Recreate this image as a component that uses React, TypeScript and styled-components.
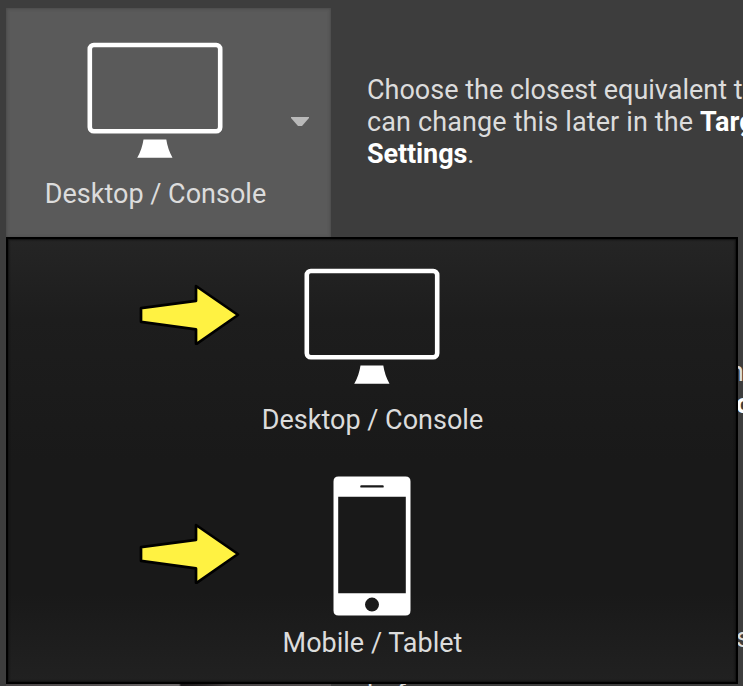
import React from "react";
import styled, { createGlobalStyle } from "styled-components";

const GlobalStyle = createGlobalStyle`
  *{box-sizing:border-box}
  body{margin:0;background:#3d3d3d;overflow:hidden;font-family:Roboto,sans-serif}
`;
const Page = styled.main`
  position:relative;width:743px;height:686px;overflow:hidden;
  padding:8px 0 0 6px;background:#3d3d3d;color:#dcdcdc;
`;
const Setting = styled.section<{ $height: number }>`
  display:flex;height:${p => p.$height}px;
`;
const Picker = styled.button`
  flex:none;width:325px;height:230px;border:0;padding:34px 0 0;
  background:#5a5a5a;box-shadow:inset 0 0 3px 1px #4b4b4b;color:#dcdcdc;
  font-family:inherit;display:grid;grid-template-columns:288px 1fr;padding-left:5px;
`;
const Choice = styled.span`
  display:flex;flex-direction:column;align-items:center;
`;
const Label = styled.span<{ $top: number }>`
  font-size:27px;line-height:32px;white-space:nowrap;margin-top:${p => p.$top}px;
  padding-left:1px;
`;
const Caret = styled.svg`
  display:block;width:20px;height:12px;margin:74px 0 0 -9px;
`;
const Copy = styled.p`
  margin:66px 0 0 36px;font-size:27px;line-height:32px;white-space:nowrap;
  b{color:#fff;font-weight:700}
`;
const CopyLine = styled.span<{ $spacing: number }>`
  display:block;letter-spacing:${p => p.$spacing}px;
`;
const EdgeCopy = styled.p<{ $top: number; $left: number }>`
  margin:${p => p.$top}px 0 0 ${p => p.$left}px;font-size:27px;line-height:32px;white-space:nowrap;
  b{display:block;color:#fff;margin-left:7px}
`;
const Thumbnail = styled.div`
  flex:none;width:325px;height:100px;
  background:linear-gradient(90deg,#4a4647 0,#555152 90px,#6c6869 165px,#6c6869 173px,#1d1a1b 175px,#2b2829 200px,#484445 225px,#555152 325px);
`;
const Menu = styled.div`
  position:absolute;left:6px;top:237px;width:732px;height:447px;
  border:2px solid #000;background:linear-gradient(#252525,#1d1d1d 80px,#191919 50%,#191919 80%,#212121);
  box-shadow:inset 0 0 2px 1px #111;
`;
const MenuItem = styled.div<{ $pad: number; $height: number }>`
  display:grid;grid-template-columns:131px 102px 262px;height:${p => p.$height}px;
  padding-top:${p => p.$pad}px;
`;
const Pointer = styled.svg<{ $top: number }>`
  grid-column:2;width:102px;height:64px;margin-top:${p => p.$top}px;
`;
const MonitorIcon = () => (
  <svg width="138" height="118" viewBox="0 0 138 118">
    <rect x="3.8" y="3" width="130.4" height="86.2" rx="4" fill="none" stroke="#fff" strokeWidth="4.6" />
    <path d="M57.5 97.5h22.8q1.5 10 6.2 18.2H51.2q4.8-8 6.3-18.2Z" fill="#fff" />
  </svg>
);
const PhoneIcon = () => (
  <svg width="78" height="141" viewBox="0 0 78 141">
    <path fillRule="evenodd" fill="#fff" d="M5.5.4h67q5 0 5 5v129.2q0 5-5 5h-67q-5 0-5-5V5.4q0-5 5-5ZM5.2 20.7v96.6h67.6V20.7ZM28.4 9.2a1.2 1.2 0 0 0 0 2.4h21.2a1.2 1.2 0 0 0 0-2.4ZM39 121.6a7 7 0 1 0 0 14 7 7 0 0 0 0-14Z" />
  </svg>
);
const Arrow = ({ top }: { top: number }) => (
  <Pointer $top={top} viewBox="0 0 102 64">
    <path d="M2 25.2 57 17.8V3L99 32 58 60.7h-1V46.4L2 38.8Z" fill="#fff242" stroke="#000" strokeWidth="2.7" strokeLinejoin="round" />
  </Pointer>
);

export default function App() {
  return (
    <>
      <GlobalStyle />
      <Page>
        <Setting $height={235}>
          <Picker>
            <Choice><MonitorIcon /><Label $top={18}>Desktop / Console</Label></Choice>
            <Caret viewBox="0 0 20 12"><path d="M1 1h18v1l-7 8h-4L1 2Z" fill="#b9b9b9" /></Caret>
          </Picker>
          <Copy>
            <CopyLine $spacing={0}>Choose the closest equivalent target platform. You</CopyLine>
            <CopyLine $spacing={0.13}>can change this later in the <b>Target Hardware</b></CopyLine>
            <CopyLine $spacing={-0.1}><b>Settings</b>.</CopyLine>
          </Copy>
        </Setting>
        <Setting $height={267}><EdgeCopy $top={113} $left={723}>n<b>o</b></EdgeCopy></Setting>
        <Setting $height={168}><EdgeCopy $top={112} $left={730}>s</EdgeCopy></Setting>
        <Setting $height={100}><Thumbnail /><EdgeCopy $top={1} $left={36}>before</EdgeCopy></Setting>
        <Menu>
          <MenuItem $pad={29} $height={208}>
            <Arrow top={15} />
            <Choice><MonitorIcon /><Label $top={18}>Desktop / Console</Label></Choice>
          </MenuItem>
          <MenuItem $pad={29} $height={210}>
            <Arrow top={46} />
            <Choice><PhoneIcon /><Label $top={10}>Mobile / Tablet</Label></Choice>
          </MenuItem>
        </Menu>
      </Page>
    </>
  );
}
